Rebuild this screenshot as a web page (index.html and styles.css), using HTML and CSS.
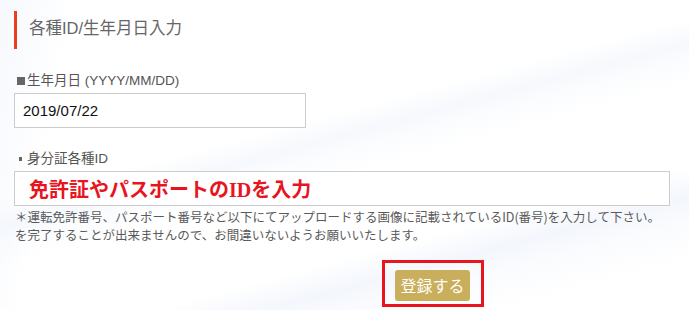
FILE: index.html
```html
<!DOCTYPE html>
<html lang="ja">
<head>
<meta charset="utf-8">
<title>各種ID/生年月日入力</title>
<link rel="stylesheet" href="styles.css">
</head>
<body>
<div class="page">
  <h2 class="heading">各種ID/生年月日入力</h2>

  <div class="field field-birth">
    <div class="label"><span class="sq-big"></span>生年月日 (YYYY/MM/DD)</div>
    <div class="input input-short">2019/07/22</div>
  </div>

  <div class="field field-id">
    <div class="label"><span class="sq-small"></span>身分証各種ID</div>
    <div class="input input-long"><span class="placeholder">免許証やパスポートのIDを入力</span></div>
    <p class="note">＊運転免許番号、パスポート番号など以下にてアップロードする画像に記載されているID(番号)を入力して下さい。<br>を完了することが出来ませんので、お間違いないようお願いいたします。</p>
  </div>

  <div class="submit-row">
    <div class="highlight"><button class="btn" type="button">登録する</button></div>
  </div>
</div>
</body>
</html>
```

FILE: styles.css
```css
html, body {
  margin: 0;
  padding: 0;
}
body {
  width: 689px;
  height: 310px;
  overflow: hidden;
  font-family: "Liberation Sans", "Noto Sans CJK JP", sans-serif;
  color: #555;
  background:
    linear-gradient(165deg,
      rgba(255,255,255,0) 41%,
      rgba(238,243,251,0.55) 46%,
      rgba(242,246,252,0.35) 49%,
      rgba(255,255,255,0) 54%,
      rgba(255,255,255,0) 71%,
      rgba(236,241,251,0.6) 77%,
      rgba(243,246,252,0.4) 82%,
      rgba(255,255,255,0) 90%),
    linear-gradient(100deg, rgba(240,244,252,0.6) 0%, rgba(255,255,255,0) 10%),
    #ffffff;
}
.page {
  padding: 11px 0 0 14px;
}
.heading {
  margin: 0;
  height: 38px;
  border-left: 3px solid #e8401f;
  padding-left: 12px;
  font-size: 16.5px;
  font-weight: normal;
  line-height: 34px;
  color: #666;
}
.field-birth {
  margin-top: 23px;
}
.field-id {
  margin-top: 22px;
}
.label {
  display: flex;
  align-items: center;
  height: 18px;
  font-size: 13.5px;
  line-height: 18px;
  color: #555;
}
.sq-big {
  width: 8px;
  height: 8px;
  background: #666;
  margin: 0 2px 0 3px;
}
.sq-small {
  width: 3px;
  height: 4px;
  background: #666;
  margin: 0 5px 0 5px;
}
.input {
  box-sizing: border-box;
  height: 35px;
  border: 1px solid #cccccc;
  background: #fff;
  display: flex;
  align-items: center;
}
.input-short {
  width: 292px;
  margin-top: 3px;
  padding-left: 8px;
  font-size: 15px;
  color: #111;
}
.input-long {
  width: 656px;
  margin-top: 3px;
  padding-left: 14px;
}
.placeholder {
  font-family: "Liberation Serif", "Noto Sans CJK JP", serif;
  font-weight: bold;
  font-size: 20px;
  color: #e8141e;
}
.note {
  margin: 2px 0 0 1px;
  font-family: "Noto Sans CJK JP", sans-serif;
  font-size: 12.5px;
  line-height: 18px;
  color: #5a5a5a;
  white-space: nowrap;
}
.submit-row {
  margin-top: 16px;
  padding-left: 368px;
}
.highlight {
  display: inline-block;
  border: 3px solid #e8141e;
  padding: 7px 11px 3px 10px;
}
.btn {
  display: block;
  width: 75px;
  height: 31px;
  border: none;
  border-radius: 3px;
  background: #c9ae5b;
  color: #fff;
  font-family: "Noto Sans CJK JP", sans-serif;
  font-size: 16px;
  line-height: 31px;
  padding: 0;
}
```
